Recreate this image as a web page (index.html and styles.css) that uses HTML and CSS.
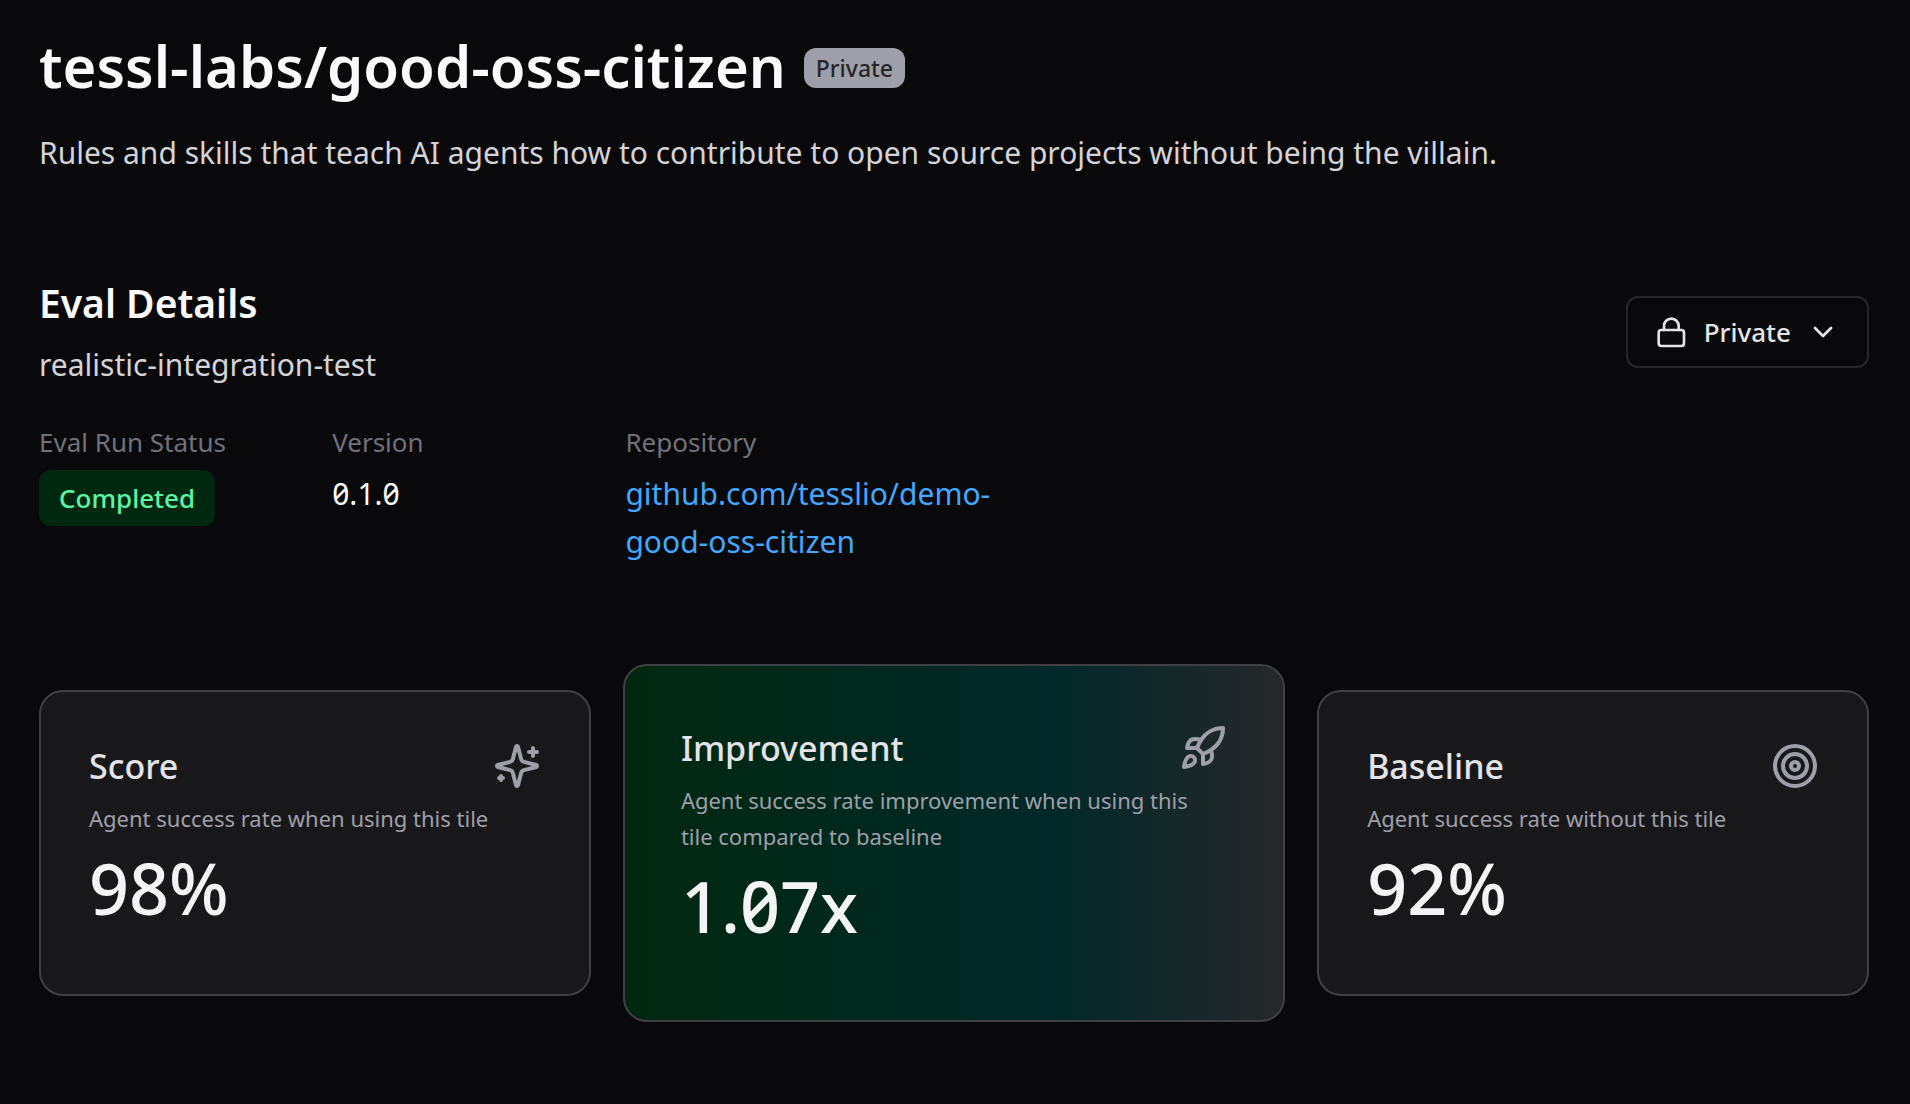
FILE: index.html
```html
<!DOCTYPE html>
<html lang="en">
<head>
  <meta charset="UTF-8">
  <meta name="viewport" content="width=device-width, initial-scale=1.0">
  <title>tessl-labs/good-oss-citizen</title>
  <link rel="stylesheet" href="styles.css">
</head>
<body>
  <header class="tile-header">
    <div class="title-row">
      <h1>tessl-labs/good-oss-citizen</h1>
      <span class="badge">Private</span>
    </div>
    <p class="summary">Rules and skills that teach AI agents how to contribute to open source projects without being the villain.</p>
  </header>

  <section class="details">
    <div class="details-head">
      <div>
        <h2>Eval Details</h2>
        <p class="eval-name">realistic-integration-test</p>
      </div>
      <button class="visibility" type="button">
        <svg class="icon" viewBox="0 0 24 24"><rect x="2" y="10.500" width="19" height="12" rx="2"/><path d="M6 10.500V7.500a5.500 5.500 0 0 1 11 0v3"/></svg>
        Private
        <svg class="icon" viewBox="0 0 24 24"><path d="m6 9 6 6 6-6"/></svg>
      </button>
    </div>
    <dl class="meta">
      <div>
        <dt>Eval Run Status</dt>
        <dd><span class="status">Completed</span></dd>
      </div>
      <div>
        <dt>Version</dt>
        <dd>0.1.0</dd>
      </div>
      <div>
        <dt>Repository</dt>
        <dd><a href="https://github.com/tesslio/demo-good-oss-citizen">github.com/tesslio/demo-good-oss-citizen</a></dd>
      </div>
    </dl>
  </section>

  <section class="cards">
    <article class="card">
      <div class="card-head">
        <h3>Score</h3>
        <svg class="card-icon" viewBox="0 0 24 24"><path d="M9.937 15.5A2 2 0 0 0 8.5 14.063l-6.135-1.582a.5.5 0 0 1 0-.962L8.5 9.936A2 2 0 0 0 9.937 8.5l1.582-6.135a.5.5 0 0 1 .963 0L14.063 8.5A2 2 0 0 0 15.5 9.937l6.135 1.581a.5.5 0 0 1 0 .964L15.5 14.063a2 2 0 0 0-1.437 1.437l-1.582 6.135a.5.5 0 0 1-.963 0z"/><path d="M20 3v4M22 5h-4M4 17v2M5 18H3"/></svg>
      </div>
      <p class="card-text">Agent success rate when using this tile</p>
      <p class="card-value">98%</p>
    </article>
    <article class="card card-main">
      <div class="card-head">
        <h3>Improvement</h3>
        <svg class="card-icon" viewBox="0 0 24 24"><path d="M4.5 16.5c-1.5 1.26-2 5-2 5s3.74-.5 5-2c.71-.84.7-2.13-.09-2.91a2.18 2.18 0 0 0-2.91-.09z"/><path d="m12 15-3-3a22 22 0 0 1 2-3.95A12.88 12.88 0 0 1 22 2c0 2.72-.78 7.5-6 11a22.35 22.35 0 0 1-4 2z"/><path d="M9 12H4s.55-3.03 2-4c1.62-1.08 5 0 5 0"/><path d="M12 15v5s3.03-.55 4-2c1.08-1.62 0-5 0-5"/></svg>
      </div>
      <p class="card-text">Agent success rate improvement when using this tile compared to baseline</p>
      <p class="card-value">1.07x</p>
    </article>
    <article class="card">
      <div class="card-head">
        <h3>Baseline</h3>
        <svg class="card-icon" viewBox="0 0 24 24"><circle cx="12" cy="12" r="10"/><circle cx="12" cy="12" r="6"/><circle cx="12" cy="12" r="2"/></svg>
      </div>
      <p class="card-text">Agent success rate without this tile</p>
      <p class="card-value">92%</p>
    </article>
  </section>
</body>
</html>
```

FILE: styles.css
```css
* {
  box-sizing: border-box;
}
body {
  margin: 0;
  padding: 44px 41px 32px 39px;
  background: #09090b;
  color: #fafafa;
  font-family: "Noto Sans", "Open Sans", sans-serif;
  font-size: 30px;
  font-variant-numeric: slashed-zero;
  line-height: 48px;
}
h1, h2, h3, p, dl, dd {
  margin: 0;
}
svg {
  fill: none;
  stroke: currentColor;
  stroke-width: 2;
  stroke-linecap: round;
  stroke-linejoin: round;
  flex-shrink: 0;
}
.title-row {
  display: flex;
  align-items: flex-end;
  gap: 18px;
}
h1 {
  font-size: 58px;
  font-weight: 600;
  line-height: 44px;
}
.badge {
  padding: 0 12px;
  border-radius: 12px;
  background: #9f9fa9;
  color: #27272a;
  font-size: 23px;
  font-weight: 500;
  line-height: 40px;
}
.summary {
  margin-top: 41px;
  color: #d4d4d8;
}
.details {
  margin-top: 98px;
}
.details-head {
  display: flex;
  justify-content: space-between;
  align-items: center;
}
h2 {
  font-size: 39px;
  font-weight: 600;
  line-height: 56px;
}
.eval-name {
  margin-top: 10px;
  color: #d4d4d8;
}
.visibility {
  display: flex;
  align-items: center;
  gap: 16px;
  height: 72px;
  padding: 0 28px;
  border: 2px solid #27272a;
  border-radius: 12px;
  background: transparent;
  color: #e4e4e7;
  font: inherit;
  font-size: 26px;
  font-weight: 500;
}
.icon {
  width: 32px;
  height: 32px;
}
.meta {
  display: grid;
  grid-template-columns: 6fr 6fr 9fr 19fr;
  gap: 34px;
  margin-top: 33px;
}
dt {
  color: #71717b;
  font-size: 26px;
  line-height: 40px;
}
dd {
  margin-top: 8px;
}
.status {
  display: inline-block;
  padding: 0 20px;
  border-radius: 12px;
  background: #002810;
  color: #5cf5a4;
  font-size: 26px;
  font-weight: 500;
  line-height: 56px;
}
a {
  color: #42a8ff;
  text-decoration: none;
}
.cards {
  display: grid;
  grid-template-columns: 5fr 6fr 5fr;
  align-items: center;
  gap: 32px;
  margin-top: 98px;
}
.card {
  padding: 48px;
  border: 2px solid #3f3f46;
  border-radius: 24px;
  background: #18181b;
}
.card-main {
  padding: 56px;
  background: linear-gradient(90deg, #002810, #002828 64%, #27272a);
}
.card-head {
  display: flex;
  justify-content: space-between;
  align-items: center;
}
.card-icon {
  width: 48px;
  height: 48px;
  color: #9f9fa9;
}
h3 {
  color: #e4e4e7;
  font-size: 34px;
  font-weight: 500;
  line-height: 52px;
}
.card-text {
  margin-top: 8px;
  padding-right: 24px;
  color: #9f9fa9;
  font-size: 22px;
  line-height: 36px;
}
.card-value {
  margin: 16px 0 22px;
  color: #f4f4f5;
  font-size: 70px;
  font-weight: 500;
  line-height: 72px;
}
```
